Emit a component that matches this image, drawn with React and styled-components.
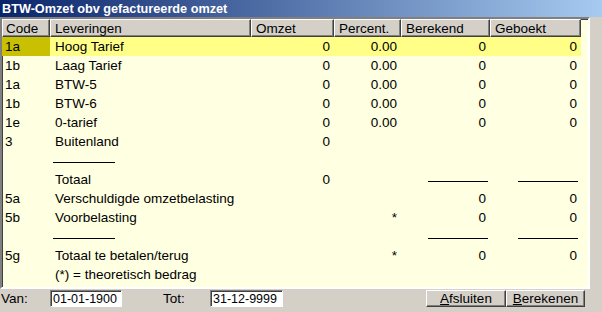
import React from "react";
import styled, { createGlobalStyle, css } from "styled-components";

const Global = createGlobalStyle`
  html, body { margin: 0; padding: 0; background: #d4d0c8; overflow: hidden; }
  * { box-sizing: border-box; }
`;

const Window = styled.div`
  width: 602px;
  height: 312px;
  background: #d4d0c8;
  display: flex;
  flex-direction: column;
  font-family: "Liberation Sans", Arial, sans-serif;
  font-size: 13.5px;
  color: #000;
`;

const TitleBar = styled.div`
  height: 17px;
  flex: none;
  background: linear-gradient(to right, #0a246a, #a6caf0);
  color: #fff;
  font-weight: bold;
  font-size: 12.7px;
  display: flex;
  align-items: center;
  padding-left: 2px;
  white-space: nowrap;
`;

const Panel = styled.div`
  width: 590px;
  height: 272px;
  flex: none;
  background: #ffffe1;
  border-style: solid;
  border-width: 2px;
  border-color: #808080 #ffffff #ffffff #808080;
  box-shadow: inset 1px 1px 0 #404040;
  display: flex;
  flex-direction: column;
`;

const cols = "48px 201px 83px 67px 89px 91px";

const HeaderRow = styled.div`
  display: grid;
  grid-template-columns: ${cols};
  height: 18px;
  flex: none;
`;

const HeaderCell = styled.div`
  background: #d4d0c8;
  border-style: solid;
  border-width: 1px;
  border-color: #ffffff #404040 #404040 #ffffff;
  box-shadow: inset -1px -1px 0 #808080;
  padding-left: ${(p) => p.$pad || 4}px;
  display: flex;
  align-items: center;
  white-space: nowrap;
  overflow: hidden;
`;

const Row = styled.div`
  display: grid;
  grid-template-columns: ${cols};
  height: 19px;
  flex: none;
`;

const Cell = styled.div`
  display: flex;
  align-items: center;
  white-space: nowrap;
  overflow: hidden;
  ${(p) =>
    p.$num
      ? css`justify-content: flex-end; padding-right: ${p.$pr ?? 4}px;`
      : css`padding-left: ${p.$pad ?? 5}px;`}
  ${(p) =>
    p.$hl &&
    css`
      background: ${p.$code ? "#c8c000" : "#ffff88"};
    `}
`;

const Rule = styled.div`
  height: 1px;
  width: ${(p) => p.$w}px;
  background: #000;
  margin-top: 3px;
  margin-left: ${(p) => p.$ml || 0}px;
`;

const BottomBar = styled.div`
  flex: 1;
  display: flex;
  align-items: flex-start;
  padding-top: 1px;
`;

const Label = styled.div`
  width: ${(p) => p.$w}px;
  margin-left: ${(p) => p.$ml || 0}px;
  height: 17px;
  display: flex;
  align-items: center;
  padding-left: 1px;
`;

const Field = styled.div`
  width: ${(p) => p.$w}px;
  height: 17px;
  background: #fff;
  border-style: solid;
  border-width: 1px;
  border-color: #808080 #ffffff #ffffff #808080;
  box-shadow: inset 1px 1px 0 #404040;
  display: flex;
  align-items: center;
  padding-left: 2px;
  font-size: 12.5px;
  white-space: nowrap;
  overflow: hidden;
`;

const Spacer = styled.div`
  flex: 1;
`;

const Buttons = styled.div`
  display: flex;
  margin-right: 17px;
`;

const Button = styled.div`
  width: ${(p) => p.$w}px;
  height: 17px;
  background: #d4d0c8;
  border-style: solid;
  border-width: 1px;
  border-color: #ffffff #404040 #404040 #ffffff;
  box-shadow: inset -1px -1px 0 #808080;
  display: flex;
  align-items: center;
  justify-content: center;
  u { text-decoration: underline; }
`;

const rows = [
  { code: "1a", name: "Hoog Tarief", omzet: "0", pct: "0.00", ber: "0", geb: "0", hl: true },
  { code: "1b", name: "Laag Tarief", omzet: "0", pct: "0.00", ber: "0", geb: "0" },
  { code: "1a", name: "BTW-5", omzet: "0", pct: "0.00", ber: "0", geb: "0" },
  { code: "1b", name: "BTW-6", omzet: "0", pct: "0.00", ber: "0", geb: "0" },
  { code: "1e", name: "0-tarief", omzet: "0", pct: "0.00", ber: "0", geb: "0" },
  { code: "3", name: "Buitenland", omzet: "0" },
  { nameRule: true },
  { name: "Totaal", omzet: "0", berRule: true, gebRule: true },
  { code: "5a", name: "Verschuldigde omzetbelasting", ber: "0", geb: "0" },
  { code: "5b", name: "Voorbelasting", pct: "*", ber: "0", geb: "0" },
  { nameRule: true, berRule: true, gebRule: true },
  { code: "5g", name: "Totaal te betalen/terug", pct: "*", ber: "0", geb: "0" },
  { name: "(*) = theoretisch bedrag" },
];

export default function App() {
  return (
    <Window>
      <Global />
      <TitleBar>BTW-Omzet obv gefactureerde omzet</TitleBar>
      <Panel>
        <HeaderRow>
          <HeaderCell $pad={3}>Code</HeaderCell>
          <HeaderCell>Leveringen</HeaderCell>
          <HeaderCell>Omzet</HeaderCell>
          <HeaderCell>Percent.</HeaderCell>
          <HeaderCell>Berekend</HeaderCell>
          <HeaderCell>Geboekt</HeaderCell>
        </HeaderRow>
        {rows.map((r, i) => (
          <Row key={i}>
            <Cell $pad={3} $hl={r.hl} $code>{r.code}</Cell>
            <Cell $hl={r.hl} $pad={r.nameRule ? 0 : 5}>
              {r.nameRule ? <Rule $w={62} $ml={3} /> : r.name}
            </Cell>
            <Cell $num $hl={r.hl}>{r.omzet}</Cell>
            <Cell $num $hl={r.hl}>{r.pct}</Cell>
            <Cell $num $hl={r.hl} $pr={r.berRule ? 2 : 4}>
              {r.berRule ? <Rule $w={60} /> : r.ber}
            </Cell>
            <Cell $num $hl={r.hl} $pr={r.gebRule ? 3 : 4}>
              {r.gebRule ? <Rule $w={60} /> : r.geb}
            </Cell>
          </Row>
        ))}
      </Panel>
      <BottomBar>
        <Label $w={50}>Van:</Label>
        <Field $w={72}>01-01-1900</Field>
        <Label $w={48} $ml={40}>Tot:</Label>
        <Field $w={73}>31-12-9999</Field>
        <Spacer />
        <Buttons>
          <Button $w={80}><span><u>A</u>fsluiten</span></Button>
          <Button $w={79}><span><u>B</u>erekenen</span></Button>
        </Buttons>
      </BottomBar>
    </Window>
  );
}
